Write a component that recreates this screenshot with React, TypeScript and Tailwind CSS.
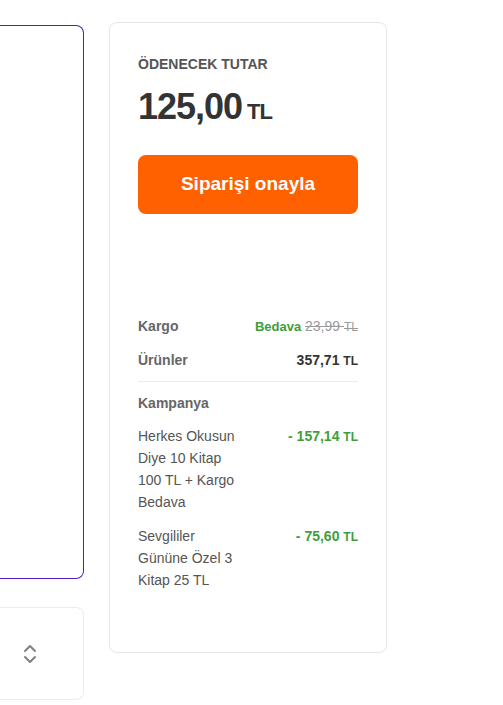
import { ChevronsUpDown } from 'lucide-react';

const CAMPAIGNS = [
  { text: 'Herkes Okusun Diye 10 Kitap 100 TL + Kargo Bedava', amount: '- 157,14' },
  { text: 'Sevgililer Gününe Özel 3 Kitap 25 TL', amount: '- 75,60' },
];

export default function App() {
  return (
    <div className="flex items-start bg-white pt-[22px] min-h-[705px]" style={{ fontFamily: '"Liberation Sans", Arial, sans-serif' }}>
      {/* left column, cut off by the viewport */}
      <div className="w-[84px] shrink-0 mt-[3px] flex flex-col gap-[28px]">
        <div className="h-[554px] border border-l-0 border-[#4f1bc4] rounded-r-[8px]" />
        <div className="h-[93px] border border-l-0 border-[#ececec] rounded-r-[8px] flex items-center pl-[18px]">
          <ChevronsUpDown className="w-6 h-6 text-[#808080]" strokeWidth={2} />
        </div>
      </div>

      {/* order summary */}
      <div className="ml-[25px] w-[278px] h-[631px] shrink-0 border border-[#e6e6e6] rounded-[8px] px-[28px] pt-[33px]">
        <p className="text-[14px] leading-[16px] font-semibold text-[#555] uppercase">ÖDENECEK TUTAR</p>
        <p className="mt-[15px] text-[36px] leading-[40px] font-bold text-[#333] tracking-[-1px]">
          125,00<span className="ml-[5px] text-[22px] leading-none tracking-[-1px]">TL</span>
        </p>
        <button className="mt-[28px] w-full h-[59px] rounded-[8px] bg-[#ff6000] text-white text-[19px] font-bold">
          Siparişi onayla
        </button>

        <div className="mt-[102px] flex justify-between text-[14px] leading-[20px]">
          <span className="font-bold text-[#666]">Kargo</span>
          <span>
            <span className="font-bold text-[13px] text-[#3f9e3b]">Bedava</span>{' '}
            <span className="line-through text-[#9a9a9a]">23,99 <span className="text-[12px] leading-none">TL</span></span>
          </span>
        </div>
        <div className="mt-[13px] flex justify-between text-[14px] leading-[20px]">
          <span className="font-bold text-[#666]">Ürünler</span>
          <span className="font-bold text-[#333]">357,71 <span className="text-[12px] leading-none">TL</span></span>
        </div>
        <div className="mt-[11px] border-t border-[#ececec]" />
        <p className="mt-[11px] text-[14px] leading-[20px] font-bold text-[#666]">Kampanya</p>

        <div className="mt-[12px] flex flex-col gap-[12px]">
          {CAMPAIGNS.map(c => (
            <div key={c.amount} className="flex justify-between items-start text-[14px] leading-[22px]">
              <span className="w-[104px] text-[#555]">{c.text}</span>
              <span className="font-bold text-[#3f9e3b]">{c.amount} <span className="text-[12px] leading-none">TL</span></span>
            </div>
          ))}
        </div>
      </div>
    </div>
  );
}
